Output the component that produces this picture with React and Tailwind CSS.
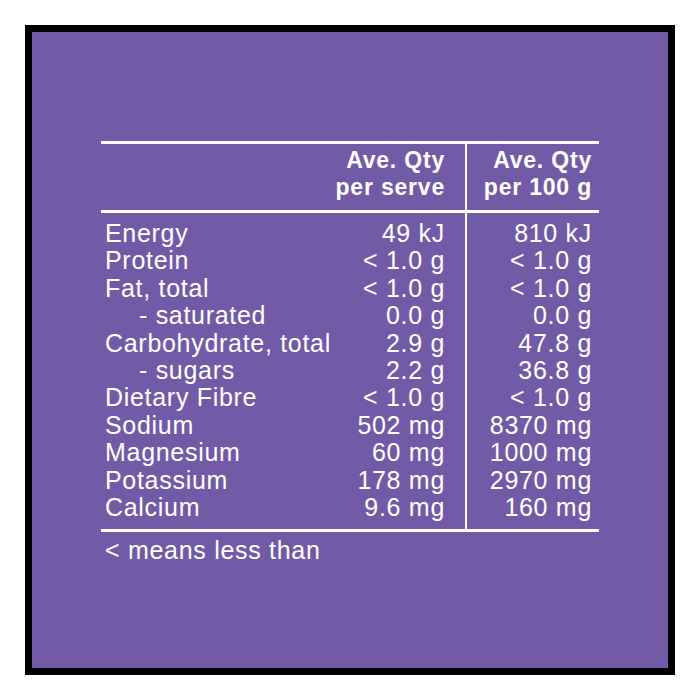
import React from 'react'

const rows = [
  { name: 'Energy', serve: '49 kJ', per100: '810 kJ' },
  { name: 'Protein', serve: '< 1.0 g', per100: '< 1.0 g' },
  { name: 'Fat, total', serve: '< 1.0 g', per100: '< 1.0 g' },
  { name: '- saturated', serve: '0.0 g', per100: '0.0 g', sub: true },
  { name: 'Carbohydrate, total', serve: '2.9 g', per100: '47.8 g' },
  { name: '- sugars', serve: '2.2 g', per100: '36.8 g', sub: true },
  { name: 'Dietary Fibre', serve: '< 1.0 g', per100: '< 1.0 g' },
  { name: 'Sodium', serve: '502 mg', per100: '8370 mg' },
  { name: 'Magnesium', serve: '60 mg', per100: '1000 mg' },
  { name: 'Potassium', serve: '178 mg', per100: '2970 mg' },
  { name: 'Calcium', serve: '9.6 mg', per100: '160 mg' },
]

const App = () => {
  return (
    <div className="w-[700px] h-[700px] bg-white p-[25px] font-['Liberation_Sans',Arial,sans-serif]">
      <div className="w-[650px] h-[650px] border-[7px] border-black bg-[#725ba6] flex flex-col items-center pt-[109px] text-white">
        {/* TABLE */}
        <div className="w-[498px] border-t-[3px] border-b-[3px] border-white grid grid-cols-[1fr_134px]">
          {/* HEADER */}
          <div className="border-b-[3px] border-white pt-[3px] pb-[9px] pr-[20px] text-right font-bold text-[23px] leading-[27px] tracking-[0.8px]">
            <div>Ave. Qty</div>
            <div>per serve</div>
          </div>
          <div className="border-b-[3px] border-l-2 border-white pt-[3px] pb-[9px] pr-[7px] text-right font-bold text-[23px] leading-[27px] tracking-[0.8px]">
            <div>Ave. Qty</div>
            <div>per 100 g</div>
          </div>

          {/* BODY */}
          <div className="pt-[7px] pb-[8px] pl-[4px] pr-[20px] text-[25px] leading-[27.4px] tracking-[0.7px]">
            {rows.map((r) => (
              <div key={r.name} className="flex justify-between">
                <span className={r.sub ? 'pl-[34px]' : ''}>{r.name}</span>
                <span>{r.serve}</span>
              </div>
            ))}
          </div>
          <div className="border-l-2 border-white pt-[7px] pb-[8px] pr-[7px] text-right text-[25px] leading-[27.4px] tracking-[0.7px]">
            {rows.map((r) => (
              <div key={r.name}>{r.per100}</div>
            ))}
          </div>
        </div>

        {/* FOOTNOTE */}
        <div className="w-[498px] pl-[4px] mt-[5px] text-[25px] leading-[27.4px] tracking-[0.7px]">
          &lt; means less than
        </div>
      </div>
    </div>
  )
}

export default App
